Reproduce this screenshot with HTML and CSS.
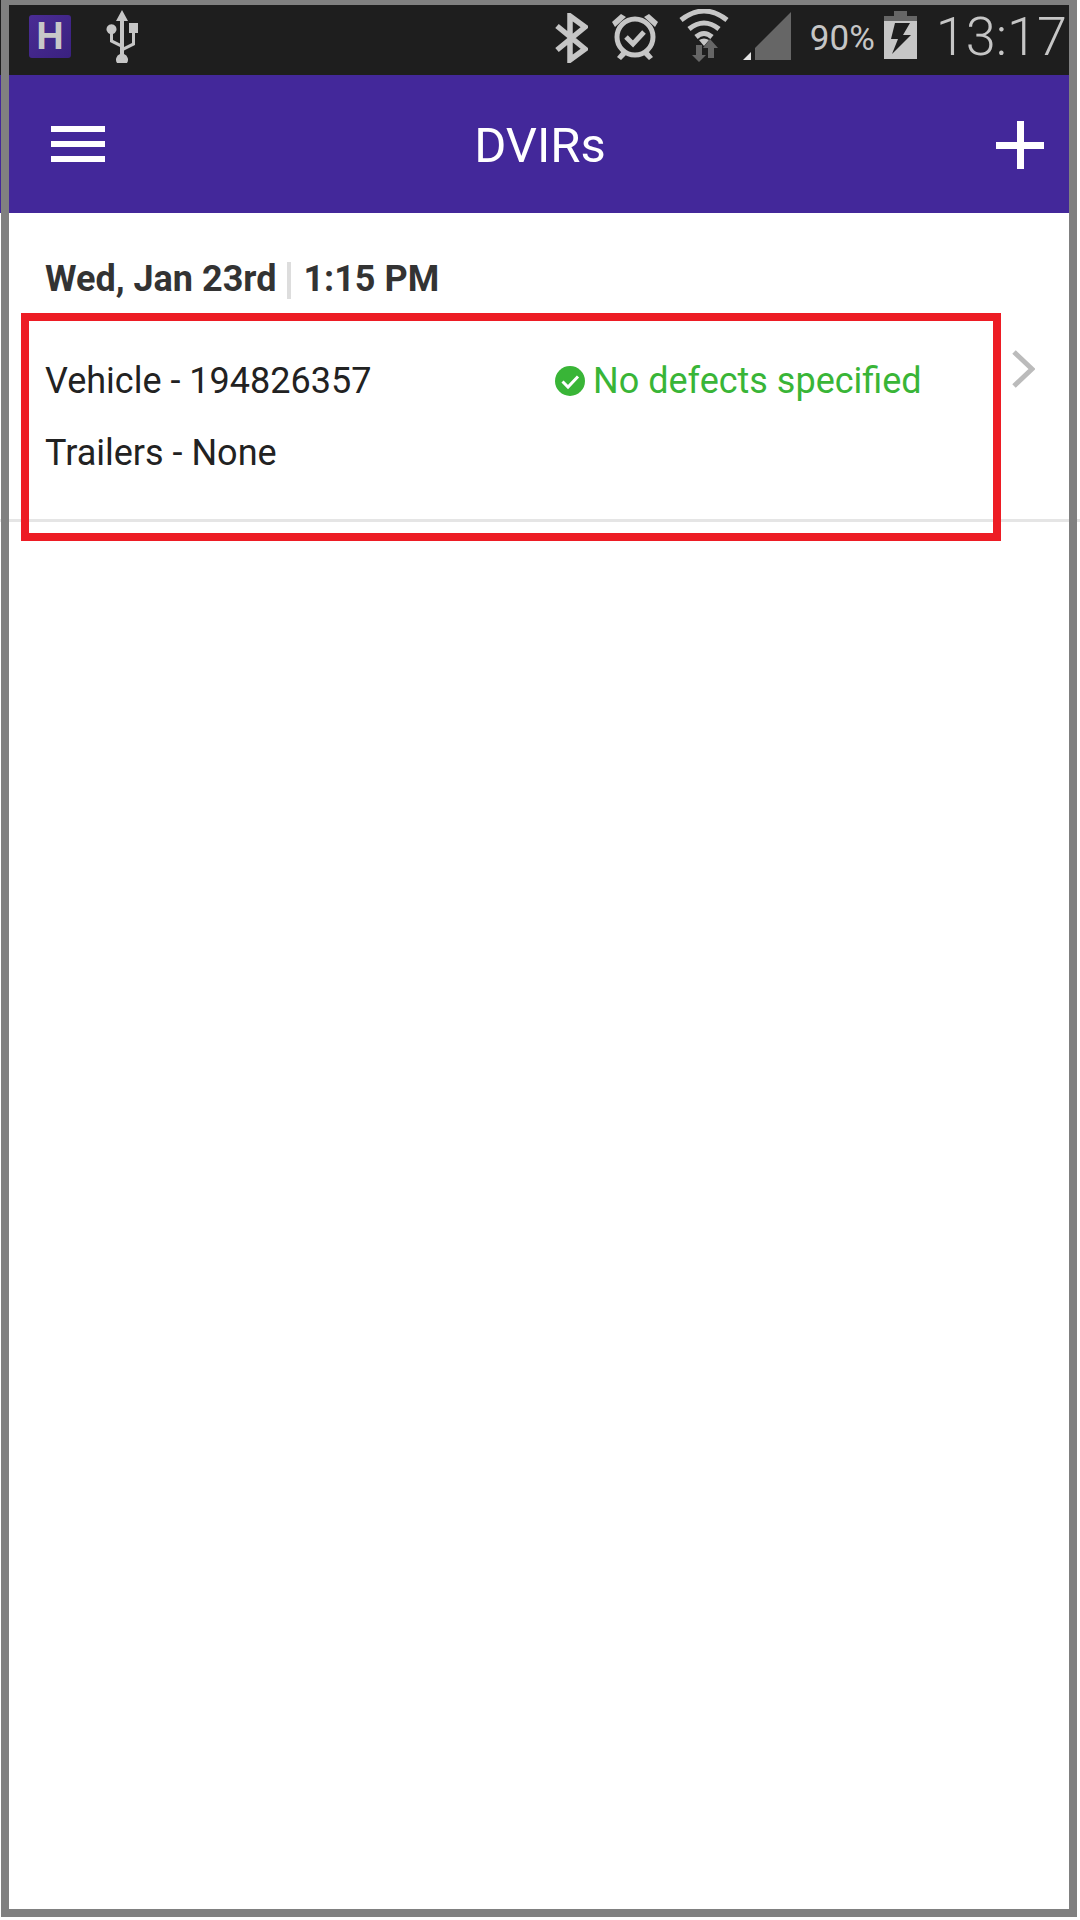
FILE: index.html
```html
<!DOCTYPE html>
<html lang="en">
<head>
    <meta charset="UTF-8">
    <meta name="viewport" content="width=device-width, initial-scale=1.0">
    <title>DVIRs</title>
    <link rel="stylesheet" href="styles.css">
</head>
<body>
    <div class="screen">
        <div class="status-bar">
            <div class="app-badge">H</div>
            <svg class="icon-usb" width="32" height="53" viewBox="0 0 32 53">
                <path d="M16 0 L22 11 L18 11 L18 37 L26 33 L26 23 L23 23 L23 13 L32 13 L32 23 L29 23 L29 35 L18 40.5 L18 44 A6 6 0 1 1 14 44 L14 37 L4 32 L4 24 A5 5 0 1 1 7 24 L7 30 L14 33.5 L14 11 L10 11 Z" fill="#c6c6c6"/>
            </svg>
            <div class="spacer"></div>
            <svg class="icon-bt" width="33" height="50" viewBox="0 0 33 50">
                <path d="M2 13 L30 36 L15 47 L15 3 L30 14 L2 37" fill="none" stroke="#c6c6c6" stroke-width="5.5"/>
            </svg>
            <svg class="icon-alarm" width="48" height="48" viewBox="0 0 48 48">
                <circle cx="24" cy="25" r="18" fill="none" stroke="#c6c6c6" stroke-width="5"/>
                <path d="M1 10 L10 2 L15 5 L4 15 Z M47 10 L38 2 L33 5 L44 15 Z M6 45 L12 38 L16 42 L10 48 Z M42 45 L36 38 L32 42 L38 48 Z" fill="#c6c6c6"/>
                <path d="M15 25 L22 32 L33 20" fill="none" stroke="#c6c6c6" stroke-width="5"/>
            </svg>
            <svg class="icon-wifi" width="50" height="53" viewBox="0 0 50 53">
                <path d="M2 11 Q25 -7 48 11 M10 20 Q25 8 40 20 M17 28 Q25 21 33 28" fill="none" stroke="#c6c6c6" stroke-width="5"/>
                <path d="M25 37 L20 31 Q25 28 30 31 Z" fill="#c6c6c6"/>
                <path d="M17 36 L23 36 L23 46 L27 46 L20 53 L13 46 L17 46 Z" fill="#666"/>
                <path d="M31 30 L39 39 L35 39 L35 49 L29 49 L29 39 L24 39 Z" fill="#666"/>
            </svg>
            <svg class="icon-signal" width="48" height="48" viewBox="0 0 48 48">
                <path d="M0 48 L8 40 L8 48 Z" fill="#e4e4e4"/>
                <path d="M12 48 L12 36 L48 0 L48 48 Z" fill="#666"/>
            </svg>
            <span class="battery-text">90%</span>
            <svg class="icon-battery" width="33" height="48" viewBox="0 0 33 48">
                <path d="M10 0 L23 0 L23 5 L33 5 L33 10 L0 10 L0 5 L10 5 Z" fill="#666"/>
                <path d="M0 10 L33 10 L33 48 L0 48 Z" fill="#c6c6c6"/>
                <path d="M11 12 L26 12 L19 24 L27 24 L8 43 L14 28 L7 28 Z" fill="#1e1e1e"/>
            </svg>
            <span class="clock">13:17</span>
        </div>

        <div class="header">
            <div class="menu-btn"><span></span><span></span><span></span></div>
            <h1>DVIRs</h1>
            <div class="add-btn"></div>
        </div>

        <div class="date-row">
            <strong>Wed, Jan 23rd</strong>
            <span class="date-sep"></span>
            <strong>1:15 PM</strong>
        </div>

        <div class="report-row">
            <div class="report-info">
                <div class="report-line">Vehicle - 194826357</div>
                <div class="report-line">Trailers - None</div>
            </div>
            <div class="report-status">
                <svg width="30" height="30" viewBox="0 0 30 30">
                    <circle cx="15" cy="15" r="15" fill="#39b537"/>
                    <path d="M7.5 15.5 L13 21 L23 10.5" fill="none" stroke="#fff" stroke-width="3"/>
                </svg>
                <span>No defects specified</span>
            </div>
            <svg class="chevron" width="23" height="38" viewBox="0 0 23 38">
                <path d="M2 2 L20 19 L2 36" fill="none" stroke="#bbb" stroke-width="5"/>
            </svg>
        </div>
    </div>

    <!-- annotation frame + red highlight sit on top of the app -->
    <div class="shot-frame"></div>
    <div class="highlight"></div>
</body>
</html>
```

FILE: styles.css
```css
* {
    box-sizing: border-box;
}
html, body {
    margin: 0;
    padding: 0;
}
body {
    width: 1080px;
    height: 1920px;
    position: relative;
    overflow: hidden;
    background: white;
    font-family: Roboto, "Liberation Sans", sans-serif;
}
.screen {
    width: 1077px;
}
.status-bar {
    height: 75px;
    background-color: #1e1e1e;
    display: flex;
    align-items: flex-start;
    padding-left: 29px;
    color: #c6c6c6;
}
.status-bar svg {
    flex: none;
}
.app-badge {
    width: 42px;
    height: 43px;
    margin-top: 15px;
    border-radius: 3px;
    background: linear-gradient(135deg, #4a2c94, #3a2180);
    color: #c8c8c8;
    font-family: "Liberation Sans", sans-serif;
    font-weight: bold;
    font-size: 38px;
    line-height: 43px;
    text-align: center;
}
.icon-usb {
    margin: 10px 0 0 35px;
}
.spacer {
    flex: 1;
}
.icon-bt {
    margin-top: 13px;
}
.icon-alarm {
    margin: 12px 0 0 23px;
}
.icon-wifi {
    margin: 9px 0 0 20px;
}
.icon-signal {
    margin: 12px 0 0 14px;
}
.battery-text {
    margin: 18px 0 0 19px;
    font-size: 35px;
    line-height: 41px;
    width: 65px;
    white-space: nowrap;
}
.icon-battery {
    margin: 11px 0 0 9px;
}
.clock {
    margin: 6px 10px 0 19px;
    font-size: 54px;
    font-weight: 300;
    line-height: 62px;
    white-space: nowrap;
}

.header {
    height: 138px;
    background-color: #43289a;
    display: flex;
    align-items: center;
    padding: 0 33px 0 51px;
    color: white;
}
.header h1 {
    flex: 1;
    margin: 2px 21px 0 0;
    font-size: 49px;
    font-weight: 400;
    text-align: center;
}
.menu-btn {
    width: 54px;
    display: flex;
    flex-direction: column;
    gap: 9px;
}
.menu-btn span {
    height: 6px;
    background: white;
}
.add-btn {
    width: 48px;
    height: 48px;
    margin-top: 2px;
    background:
        linear-gradient(white, white) center / 48px 7px no-repeat,
        linear-gradient(white, white) center / 7px 48px no-repeat;
}

.date-row {
    display: flex;
    align-items: center;
    height: 100px;
    padding: 32px 0 0 45px;
    font-size: 36px;
    color: #333;
}
.date-sep {
    width: 4px;
    height: 37px;
    margin: 2px 12px 0 11px;
    background-color: #ddd;
}

.report-row {
    position: relative;
    width: 1080px;
    height: 209px;
    display: flex;
    align-items: flex-start;
    padding-left: 45px;
    border-bottom: 3px solid #e5e5e5;
}
.report-info {
    width: 510px;
    padding-top: 32px;
}
.report-line {
    font-size: 36px;
    line-height: 72px;
    color: #222;
}
.report-status {
    display: flex;
    align-items: center;
    margin-top: 32px;
    height: 72px;
    gap: 8px;
    font-size: 36px;
    color: #39b537;
}
.chevron {
    position: absolute;
    left: 1012px;
    top: 37px;
}

.shot-frame {
    position: absolute;
    left: 1px;
    top: -3px;
    width: 1076px;
    height: 1920px;
    border: 8px solid #808080;
    pointer-events: none;
}
.highlight {
    position: absolute;
    left: 21px;
    top: 313px;
    width: 980px;
    height: 228px;
    border: 8px solid #ed1c24;
    pointer-events: none;
}
```
